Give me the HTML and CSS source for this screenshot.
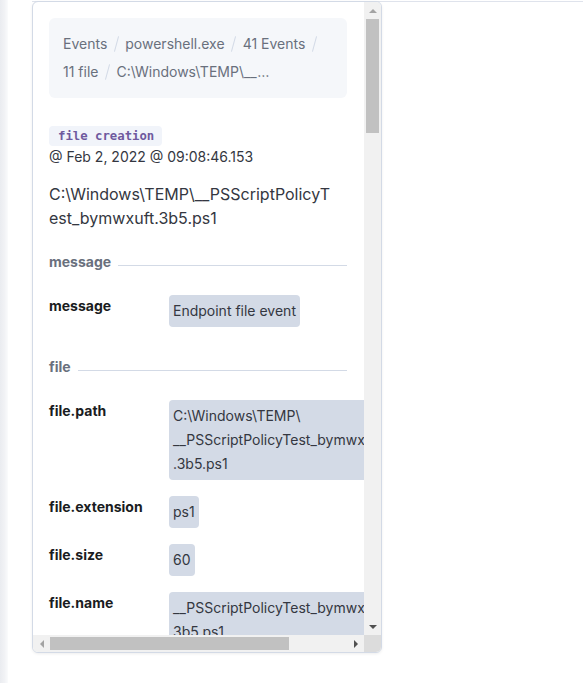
FILE: index.html
```html
<!DOCTYPE html>
<html lang="en">
<head>
<meta charset="utf-8">
<title>Event details</title>
<link rel="stylesheet" href="styles.css">
</head>
<body>
<div class="page">
  <div class="gutter"></div>
  <div class="main">
    <div class="frame">
      <div class="flyout">
        <div class="viewport">
          <div class="content">
            <ul class="crumbs">
              <li class="crumb">Events<span class="sep"></span></li>
              <li class="crumb">powershell.exe<span class="sep"></span></li>
              <li class="crumb">41 Events<span class="sep"></span></li>
              <li class="crumb">11 file<span class="sep"></span></li>
              <li class="crumb crumb-last"><span class="crumb-text">C:\Windows\TEMP\__PSScriptPolicyTest_bymwxuft.3b5.ps1</span></li>
            </ul>

            <span class="badge">file creation</span>
            <div class="timestamp">@ Feb 2, 2022 @ 09:08:46.153</div>
            <h2 class="title">C:\Windows\TEMP\__PSScriptPolicyTest_bymwxuft.3b5.ps1</h2>

            <div class="section"><span class="section-name">message</span><span class="section-line"></span></div>
            <div class="fields">
              <div class="key">message</div>
              <div class="val">Endpoint file event</div>
            </div>

            <div class="section"><span class="section-name">file</span><span class="section-line"></span></div>
            <div class="fields">
              <div class="key">file.path</div>
              <div class="val">C:\Windows\TEMP\<wbr>__PSScriptPolicyTest_bymwxuft<wbr>.3b5.ps1</div>
              <div class="key">file.extension</div>
              <div class="val">ps1</div>
              <div class="key">file.size</div>
              <div class="val">60</div>
              <div class="key">file.name</div>
              <div class="val">__PSScriptPolicyTest_bymwxuft.<wbr>3b5.ps1</div>
            </div>
          </div>
        </div>

        <div class="vbar">
          <div class="sb-btn"><span class="arrow arrow-up"></span></div>
          <div class="vtrack"><div class="vthumb"></div></div>
          <div class="sb-btn"><span class="arrow arrow-down"></span></div>
        </div>
        <div class="hbar">
          <div class="sb-btn sb-btn-h"><span class="arrow arrow-left"></span></div>
          <div class="htrack"><div class="hthumb"></div></div>
          <div class="sb-btn sb-btn-h"><span class="arrow arrow-right"></span></div>
        </div>
        <div class="corner"></div>
      </div>
    </div>
  </div>
</div>
</body>
</html>
```

FILE: styles.css
```css
* { box-sizing: border-box; }

html, body {
  margin: 0;
  padding: 0;
  background: #ffffff;
  font-family: Inter, "Noto Sans", sans-serif;
  color: #343741;
}

.page {
  display: flex;
  height: 683px;
  overflow: hidden;
}

.gutter {
  width: 8px;
  flex: none;
  background: linear-gradient(90deg, #eaecf0 0%, #f1f2f5 55%, #fafbfc 100%);
}

.main {
  flex: 1;
  padding-left: 24px;
}

.frame {
  margin-top: 1px;
  border-top: 1px solid #dfe3ec;
}

.flyout {
  margin-top: -1px;
  width: 350px;
  height: 652px;
  border: 1px solid #d3dae6;
  border-radius: 6px;
  overflow: hidden;
  background: #fff;
  box-shadow: 0 1px 3px rgba(0, 0, 0, 0.07);
  display: grid;
  grid-template-columns: 331px 17px;
  grid-template-rows: 633px 17px;
}

.viewport {
  overflow: hidden;
  min-width: 0;
  min-height: 0;
}

/* drawn scrollbars */
.vbar {
  display: flex;
  flex-direction: column;
  background: #f1f1f1;
}

.hbar {
  display: flex;
  background: #f1f1f1;
}

.corner {
  background: #dcdcdc;
}

.sb-btn {
  flex: none;
  height: 17px;
  display: flex;
  align-items: center;
  justify-content: center;
}

.sb-btn-h {
  height: auto;
  width: 17px;
}

.vtrack {
  flex: 1;
  padding: 0 2px;
}

.vthumb {
  height: 114px;
  background: #c1c1c1;
}

.htrack {
  flex: 1;
  padding: 2px 0;
}

.hthumb {
  width: 239px;
  height: 100%;
  background: #c1c1c1;
}

.arrow {
  width: 0;
  height: 0;
  border: 4px solid transparent;
}

.arrow-up {
  border-top-width: 0;
  border-bottom-color: #a3a3a3;
}

.arrow-down {
  border-bottom-width: 0;
  border-top-color: #505050;
}

.arrow-left {
  border-left-width: 0;
  border-right-color: #a3a3a3;
}

.arrow-right {
  border-right-width: 0;
  border-left-color: #505050;
}

.content {
  padding: 16px 18px 16px 16px;
}

/* breadcrumbs */
.crumbs {
  list-style: none;
  margin: 0 0 26px;
  padding: 12px 14px;
  width: 298px;
  display: flex;
  flex-wrap: wrap;
  background: #f5f7fa;
  border-radius: 6px;
  font-size: 14px;
  line-height: 28px;
  color: #69707d;
}

.crumb {
  display: flex;
  align-items: center;
  white-space: nowrap;
}

.sep {
  display: inline-block;
  width: 1px;
  height: 16px;
  margin: 0 8.5px;
  background: #d3dae6;
  transform: rotate(15deg);
}

.crumb-text {
  display: inline-block;
  max-width: 153px;
  overflow: hidden;
  text-overflow: ellipsis;
  white-space: nowrap;
}

/* header */
.badge {
  display: inline-block;
  height: 20px;
  padding: 0 8px 0 9px;
  line-height: 20px;
  border-radius: 4px;
  background: #f1f4fa;
  color: #6f5a9e;
  font-family: "DejaVu Sans Mono", "Liberation Mono", monospace;
  font-weight: 700;
  font-size: 12.3px;
}

.timestamp {
  font-size: 14px;
  line-height: 21px;
  color: #343741;
}

.title {
  margin: 15px 0 0;
  width: 282px;
  font-size: 16px;
  font-weight: 400;
  line-height: 24px;
  color: #343741;
  word-break: break-all;
}

/* sections */
.section {
  display: flex;
  align-items: center;
  margin-top: 21px;
  width: 298px;
  font-size: 14px;
  line-height: 21px;
  font-weight: 700;
  color: #69707d;
}

.section-line {
  flex: 1;
  height: 1px;
  margin-left: 7px;
  margin-top: 8px;
  background: #d3dae6;
}

.fields {
  display: grid;
  grid-template-columns: 120px 270px;
  row-gap: 16px;
  margin-top: 23px;
  padding-bottom: 8px;
  width: 390px;
}

.key {
  font-size: 14px;
  line-height: 21px;
  font-weight: 700;
  color: #1a1c21;
}

.val {
  justify-self: start;
  max-width: 100%;
  padding: 4px;
  border-radius: 4px;
  background: #d3dae6;
  font-size: 14px;
  line-height: 24px;
  color: #343741;
}
```
